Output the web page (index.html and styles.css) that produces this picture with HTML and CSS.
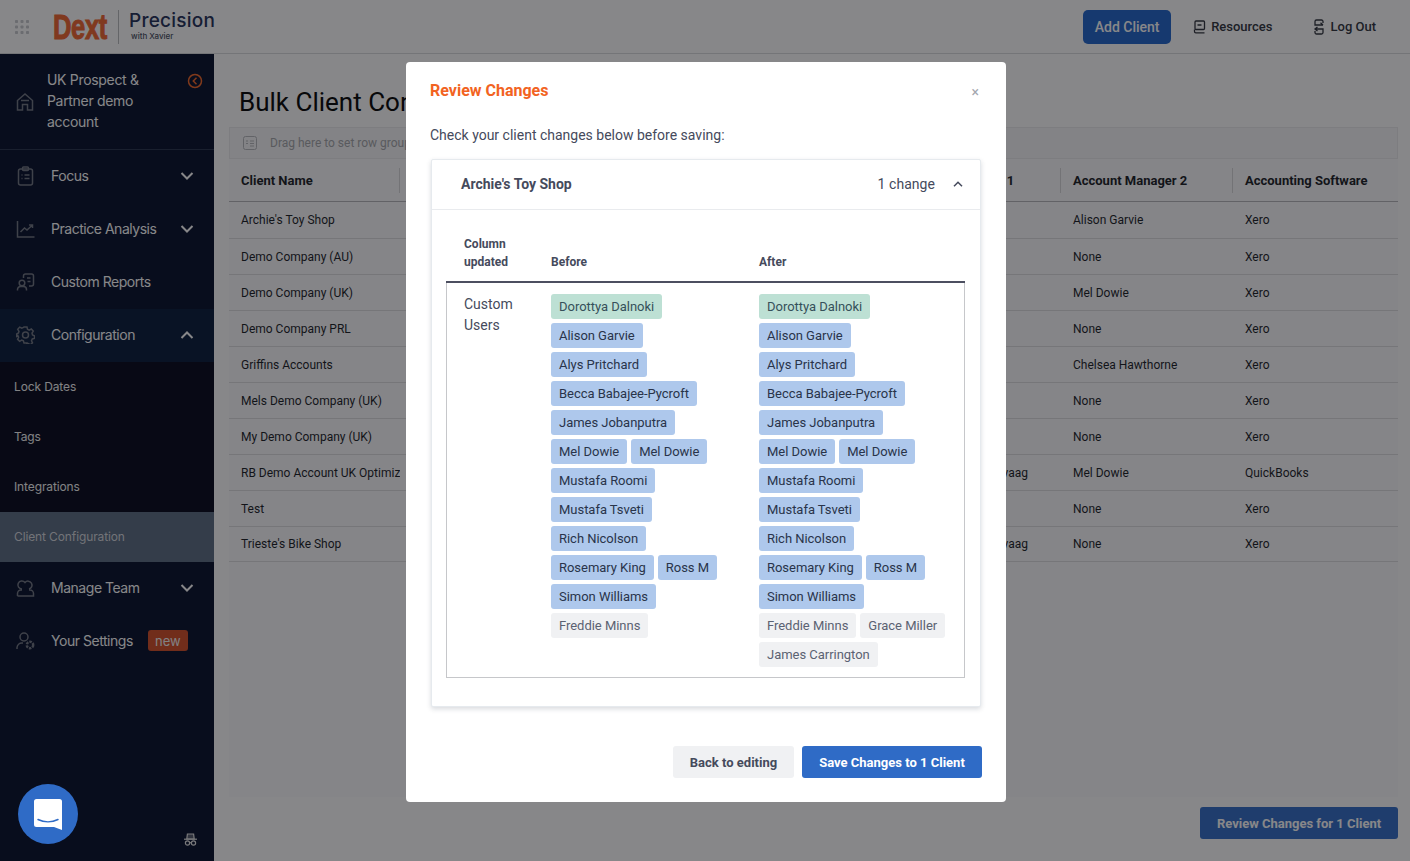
FILE: index.html
```html
<!DOCTYPE html>
<html lang="en">
<head>
<meta charset="utf-8">
<title>Bulk Client Configuration</title>
<link rel="stylesheet" href="styles.css">
</head>
<body>
<div class="app">
  <header class="topbar">
    <svg class="apps" width="16" height="16" viewBox="0 0 16 16"><g fill="#c6c8cc"><rect x="1" y="1" width="3" height="3" rx=".8"/><rect x="6.500" y="1" width="3" height="3" rx=".8"/><rect x="12" y="1" width="3" height="3" rx=".8"/><rect x="1" y="6.500" width="3" height="3" rx=".8"/><rect x="6.500" y="6.500" width="3" height="3" rx=".8"/><rect x="12" y="6.500" width="3" height="3" rx=".8"/><rect x="1" y="12" width="3" height="3" rx=".8"/><rect x="6.500" y="12" width="3" height="3" rx=".8"/><rect x="12" y="12" width="3" height="3" rx=".8"/></g></svg>
    <div class="dext"><span>Dext</span></div>
    <div class="brand">
      <div class="precision">Precision</div>
      <div class="xavier">with Xavier</div>
    </div>
    <div class="top-actions">
      <button class="add-client">Add Client</button>
      <a class="top-link resources">
        <svg width="13" height="14" viewBox="0 0 13 14" fill="none" stroke="#2b2f38" stroke-width="1.300"><rect x="2" y="1" width="9.500" height="8.500" rx="1"/><path d="M4.500 5h4M1.500 9.500v2a1.300 1.300 0 0 0 1.300 1.300h8.700"/></svg>
        Resources
      </a>
      <a class="top-link logout">
        <svg width="12" height="16" viewBox="0 0 12 16" fill="none" stroke="#2b2f38" stroke-width="1.300"><path d="M10 4V2.500A1.500 1.500 0 0 0 8.500 1h-5A1.500 1.500 0 0 0 2 2.500V6h8M7.500 3.800 10 6M2 10h8v3.500A1.500 1.500 0 0 1 8.500 15h-5A1.500 1.500 0 0 1 2 13.500V12M4.500 8 2 10l2.500 2"/></svg>
        Log Out
      </a>
    </div>
  </header>
  <div class="body">
    <aside class="sidebar">
      <div class="account">
        <svg class="account-icon" width="18" height="20" viewBox="0 0 18 20" fill="none" stroke="#6e7480" stroke-width="1.500"><path d="M1.500 8.500 9 2l7.500 6.500V18h-5v-5.500h-5V18h-5z"/><path d="M5 8.500h8"/></svg>
        <div class="account-name">UK Prospect &amp; Partner demo account</div>
        <svg class="collapse" width="16" height="16" viewBox="0 0 16 16" fill="none" stroke="#f26322" stroke-width="1.500"><circle cx="8" cy="8" r="6.500"/><path d="M9.500 4.800 6.300 8l3.200 3.200"/></svg>
      </div>
      <nav class="menu">
        <a class="item">
          <svg class="item-icon" width="18" height="20" viewBox="0 0 18 20" fill="none" stroke="#6e7480" stroke-width="1.500"><rect x="2" y="3" width="14" height="16" rx="2"/><rect x="6" y="1" width="6" height="3.500" rx="1"/><path d="M5 9h1M8 9h5M5 12.500h1M8 12.500h5"/></svg>
          <span>Focus</span>
          <svg class="chev" width="14" height="8" viewBox="0 0 14 8" fill="none" stroke="#fff" stroke-width="2"><path d="m1.500 1 5.500 5.500L12.500 1"/></svg>
        </a>
        <a class="item">
          <svg class="item-icon" width="18" height="18" viewBox="0 0 18 18" fill="none" stroke="#6e7480" stroke-width="1.500"><path d="M1 1v16h17"/><path d="m4 12 4-4 2.500 2L16 5M12.500 5H16v3"/></svg>
          <span>Practice Analysis</span>
          <svg class="chev" width="14" height="8" viewBox="0 0 14 8" fill="none" stroke="#fff" stroke-width="2"><path d="m1.500 1 5.500 5.500L12.500 1"/></svg>
        </a>
        <a class="item">
          <svg class="item-icon" width="18" height="18" viewBox="0 0 18 18" fill="none" stroke="#6e7480" stroke-width="1.500"><circle cx="5.500" cy="10" r="2.800"/><path d="M1 17.500v-1A3 3 0 0 1 4 13.500h3a3 3 0 0 1 3 3v1"/><path d="M7 5V3a2 2 0 0 1 2-2h6a2 2 0 0 1 2 2v8a2 2 0 0 1-2 2h-2.500M10.500 5H14M11 8.500h3"/></svg>
          <span>Custom Reports</span>
        </a>
        <a class="item item-open">
          <svg class="item-icon" width="18" height="18" viewBox="0 0 18 18" fill="none" stroke="#6e7480" stroke-width="1.500"><path d="M7.500 1h3l.5 2.300 1.700.8 2.100-1.100 2 2.200-1.300 2 .5 1.700 2 .9v2.600l-2.200.6-.8 1.800 1 2-2.100 2-2-1.200-1.700.7L10.500 17h-3l-.6-2.200-1.700-.7-2 1.200-2.100-2 1-2-.8-1.800L0 10.500V8l2-1 .5-1.700-1.300-2 2-2.200 2.100 1.100 1.700-.8z"/><circle cx="9" cy="9" r="3"/></svg>
          <span>Configuration</span>
          <svg class="chev" width="14" height="8" viewBox="0 0 14 8" fill="none" stroke="#fff" stroke-width="2"><path d="m1.500 7 5.500-5.500L12.500 7"/></svg>
        </a>
        <div class="submenu">
          <a class="subitem">Lock Dates</a>
          <a class="subitem">Tags</a>
          <a class="subitem">Integrations</a>
          <a class="subitem subitem-active">Client Configuration</a>
        </div>
        <a class="item">
          <svg class="item-icon" width="18" height="18" viewBox="0 0 18 18" fill="none" stroke="#6e7480" stroke-width="1.500"><path d="M5.500 10a4 4 0 1 1 3-6.500A4 4 0 1 1 12.500 10M1 17v-2.500A3.500 3.500 0 0 1 4.500 11h1M12.500 11h1a3.500 3.500 0 0 1 3.500 3.500V17H1"/></svg>
          <span>Manage Team</span>
          <svg class="chev" width="14" height="8" viewBox="0 0 14 8" fill="none" stroke="#fff" stroke-width="2"><path d="m1.500 1 5.500 5.500L12.500 1"/></svg>
        </a>
        <a class="item">
          <svg class="item-icon" width="19" height="18" viewBox="0 0 19 18" fill="none" stroke="#6e7480" stroke-width="1.500"><circle cx="8" cy="5" r="4"/><path d="M1 17v-1.500A5 5 0 0 1 6 11h1"/><circle cx="14" cy="13" r="3.200" stroke-width="2.500" stroke-dasharray="2.500 1"/></svg>
          <span>Your Settings</span>
          <span class="new-badge">new</span>
        </a>
      </nav>
      <svg class="incognito" width="13" height="13" viewBox="0 0 13 13" fill="none" stroke="#e4e4e4" stroke-width="1.200"><path d="M2.800 6 3.400 1h6.200l.6 5z" fill="#e4e4e4" fill-opacity=".35"/><path d="M0 6.200h13"/><circle cx="3.500" cy="10" r="2.100"/><circle cx="9.500" cy="10" r="2.100"/><path d="M5.600 9.700h1.800"/></svg>
    </aside>
    <main class="main">
      <h1 class="page-title">Bulk Client Configuration</h1>
      <div class="grid-panel">
        <div class="group-bar">
          <svg width="14" height="14" viewBox="0 0 14 14" fill="none" stroke="#b4b6ba" stroke-width="1"><rect x=".5" y=".5" width="13" height="13" rx="2"/><path d="M7 5h4M7 7.500h4M7 10h4M3 5h2M3 7.500h2" /></svg>
          <span>Drag here to set row groups</span>
        </div>
        <div class="row row-head">
          <div class="cell">Client Name</div><div class="cell">Tags</div><div class="cell">Account Manager 1</div><div class="cell">Account Manager 2</div><div class="cell">Accounting Software</div>
        </div>
        <div class="row row-first"><div class="cell">Archie's Toy Shop</div><div class="cell"></div><div class="cell"></div><div class="cell">Alison Garvie</div><div class="cell">Xero</div></div>
        <div class="row"><div class="cell">Demo Company (AU)</div><div class="cell"></div><div class="cell"></div><div class="cell">None</div><div class="cell">Xero</div></div>
        <div class="row"><div class="cell">Demo Company (UK)</div><div class="cell"></div><div class="cell"></div><div class="cell">Mel Dowie</div><div class="cell">Xero</div></div>
        <div class="row"><div class="cell">Demo Company PRL</div><div class="cell"></div><div class="cell"></div><div class="cell">None</div><div class="cell">Xero</div></div>
        <div class="row"><div class="cell">Griffins Accounts</div><div class="cell"></div><div class="cell"></div><div class="cell">Chelsea Hawthorne</div><div class="cell">Xero</div></div>
        <div class="row"><div class="cell">Mels Demo Company (UK)</div><div class="cell"></div><div class="cell"></div><div class="cell">None</div><div class="cell">Xero</div></div>
        <div class="row"><div class="cell">My Demo Company (UK)</div><div class="cell"></div><div class="cell"></div><div class="cell">None</div><div class="cell">Xero</div></div>
        <div class="row"><div class="cell">RB Demo Account UK Optimiz</div><div class="cell"></div><div class="cell cell-end">Karoline Haugvaag</div><div class="cell">Mel Dowie</div><div class="cell">QuickBooks</div></div>
        <div class="row"><div class="cell">Test</div><div class="cell"></div><div class="cell"></div><div class="cell">None</div><div class="cell">Xero</div></div>
        <div class="row row-last"><div class="cell">Trieste's Bike Shop</div><div class="cell"></div><div class="cell cell-end">Karoline Haugvaag</div><div class="cell">None</div><div class="cell">Xero</div></div>
      </div>
      <div class="main-footer"><button class="review-btn">Review Changes for 1 Client</button></div>
    </main>
  </div>
</div>

<div class="overlay">
  <div class="modal">
    <div class="modal-head">
      <h2 class="modal-title">Review Changes</h2>
      <span class="modal-close">×</span>
    </div>
    <p class="modal-intro">Check your client changes below before saving:</p>
    <section class="card">
      <div class="card-head">
        <span class="card-title">Archie's Toy Shop</span>
        <span class="card-count">1 change</span>
        <svg width="10" height="6" viewBox="0 0 10 6" fill="none" stroke="#454a5c" stroke-width="1.500"><path d="m1 5.300 4-4 4 4"/></svg>
      </div>
      <div class="changes">
        <div class="changes-head">
          <div>Column updated</div><div>Before</div><div>After</div>
        </div>
        <div class="changes-body">
          <div class="col-name">Custom Users</div>
          <div class="tags">
            <span class="tag tag-green">Dorottya Dalnoki</span><span class="tag">Alison Garvie</span><span class="tag">Alys Pritchard</span><span class="tag">Becca Babajee-Pycroft</span><span class="tag">James Jobanputra</span><span class="tag">Mel Dowie</span><span class="tag">Mel Dowie</span><span class="tag">Mustafa Roomi</span><span class="tag">Mustafa Tsveti</span><span class="tag">Rich Nicolson</span><span class="tag">Rosemary King</span><span class="tag">Ross M</span><span class="tag">Simon Williams</span><span class="tag tag-grey">Freddie Minns</span>
          </div>
          <div class="tags">
            <span class="tag tag-green">Dorottya Dalnoki</span><span class="tag">Alison Garvie</span><span class="tag">Alys Pritchard</span><span class="tag">Becca Babajee-Pycroft</span><span class="tag">James Jobanputra</span><span class="tag">Mel Dowie</span><span class="tag">Mel Dowie</span><span class="tag">Mustafa Roomi</span><span class="tag">Mustafa Tsveti</span><span class="tag">Rich Nicolson</span><span class="tag">Rosemary King</span><span class="tag">Ross M</span><span class="tag">Simon Williams</span><span class="tag tag-grey">Freddie Minns</span><span class="tag tag-grey">Grace Miller</span><span class="tag tag-grey">James Carrington</span>
          </div>
        </div>
      </div>
    </section>
    <div class="modal-foot">
      <button class="btn-back">Back to editing</button>
      <button class="btn-save">Save Changes to 1 Client</button>
    </div>
  </div>
</div>

<button class="chat" aria-label="Chat">
  <svg width="28" height="32" viewBox="0 0 28 32"><path d="M2.500 1h23A2.500 2.500 0 0 1 28 3.500V32l-8-3H2.500A2.500 2.500 0 0 1 0 26.500v-23A2.500 2.500 0 0 1 2.500 1z" fill="#fff"/><path d="M4 21.500c6 3 14 3 20 0" fill="none" stroke="#2f6bc6" stroke-width="1.500" stroke-linecap="round"/></svg>
</button>
</body>
</html>
```
FILE: styles.css
```css
* { box-sizing: border-box; }
html, body { margin: 0; height: 100%; overflow: hidden; }
body { font-family: Roboto, "Liberation Sans", sans-serif; background: #fff; color: #1b1f27; }
button { font-family: inherit; border: 0; cursor: pointer; }
h1, h2, p { margin: 0; }

.app { height: 861px; display: flex; flex-direction: column; }

/* top bar */
.topbar { height: 54px; flex: none; display: flex; align-items: center; background: #fff; border-bottom: 1px solid #d9dadc; padding-left: 14px; }
.apps { flex: none; }
.dext { width: 54px; margin-left: 23px; margin-right: 11px; height: 34px; display: flex; align-items: center; }
.dext span { display: inline-block; font-family: "Liberation Sans", sans-serif; font-weight: 700; font-size: 35px; line-height: 34px; letter-spacing: -.5px; color: #f0622a; transform: scaleX(.73); transform-origin: left center; -webkit-text-stroke: 1px #f0622a; }
.brand { height: 34px; border-left: 1px solid #b9babd; padding-left: 10px; display: flex; flex-direction: column; }
.precision { font-family: Inter, sans-serif; font-size: 19px; line-height: 21px; font-weight: 500; letter-spacing: .25px; color: #1c2d55; }
.xavier { font-family: Inter, sans-serif; font-size: 8px; line-height: 10px; font-weight: 500; color: #434a5c; margin-left: 2px; }
.top-actions { margin-left: auto; display: flex; align-items: center; padding-right: 34px; }
.add-client { width: 88px; height: 34px; border-radius: 5px; background: #1c62cb; color: #fff; font-size: 14px; font-weight: 500; }
.top-link { display: flex; align-items: center; font-size: 13px; font-weight: 500; color: #2b2f38; }
.top-link svg { margin-right: 5px; }
.resources { margin-left: 22px; }
.logout { margin-left: 41px; }

.body { flex: 1; display: flex; min-height: 0; }

/* sidebar */
.sidebar { position: relative; width: 214px; flex: none; background: #000a26; color: #fff; font-family: Inter, sans-serif; }
.account { position: relative; height: 96px; display: flex; align-items: center; padding-left: 47px; border-bottom: 1px solid #222f48; }
.account-icon { position: absolute; left: 16px; top: 38px; }
.account-name { width: 112px; font-size: 14px; line-height: 21px; letter-spacing: -.32px; color: #fff; margin-top: -3px; }
.collapse { position: absolute; right: 11px; top: 19px; }
.menu { display: flex; flex-direction: column; }
.item { height: 53px; display: flex; align-items: center; padding: 0 0 2px 16px; font-size: 14px; letter-spacing: -.47px; color: #fff; }
.item-icon { flex: none; width: 19px; margin-right: 16px; }
.item .chev { margin-left: auto; margin-right: 20px; }
.item-open { background: #021636; }
.submenu { background: #000316; display: flex; flex-direction: column; }
.subitem { height: 50px; display: flex; align-items: center; padding: 0 0 2px 14px; font-size: 12px; letter-spacing: -.12px; color: #f4f4f4; }
.subitem-active { background: #586a80; color: #d4d7dc; }
.new-badge { margin-left: 15px; width: 40px; height: 21px; border-radius: 3px; background: #d24a22; display: flex; align-items: center; justify-content: center; font-size: 13px; letter-spacing: 0; color: #f3f3f3; }
.incognito { position: absolute; right: 17px; bottom: 15px; }

/* main */
.main { flex: 1; min-width: 0; background: #fff; padding: 0 12px 0 15px; display: flex; flex-direction: column; }
.page-title { font-size: 26px; line-height: 32px; font-weight: 400; color: #000; margin: 32px 0 0 10px; height: 41px; }
.grid-panel { height: 670px; background: #fbfbfc; }
.group-bar { height: 32px; display: flex; align-items: center; padding-left: 13px; border: 1px solid #eaebed; background: #f7f7f8; font-size: 12px; color: #a3a5a9; }
.group-bar span { margin-left: 13px; }
.row { height: 36px; display: grid; grid-template-columns: 171px 488px 173px 172px 165px; align-items: center; border-bottom: 1px solid #dcdcde; font-size: 12px; color: #15181e; }
.row-first { height: 37px; }
.row-last { height: 35px; }
.cell { padding-left: 12px; white-space: nowrap; overflow: hidden; }
.cell-end { padding: 0 33px 0 0; text-align: right; }
.row-head { height: 43px; font-size: 13px; font-weight: 700; border-bottom: 1px solid #b4b5b8; }
.row-head .cell { height: 25px; line-height: 26px; border-right: 1px solid #d6d7d9; }
.row-head .cell:last-child { border-right: 0; }
.main-footer { flex: 1; display: flex; justify-content: flex-end; align-items: flex-start; padding-top: 10px; }
.review-btn { width: 198px; height: 32px; border-radius: 3px; background: #2f6bc6; color: #fff; font-size: 13px; font-weight: 700; }

/* overlay and modal */
.overlay { position: fixed; inset: 0; background: rgba(16,16,20,.5); display: flex; align-items: flex-start; }
.modal { width: 600px; height: 740px; margin: 62px 0 0 406px; background: #fff; border-radius: 4px; padding: 0 24px; display: flex; flex-direction: column; color: #454a5c; }
.modal-head { display: flex; justify-content: space-between; align-items: center; height: 56px; }
.modal-title { font-size: 16px; line-height: 20px; font-weight: 700; color: #f26322; margin-top: 1px; }
.modal-close { font-size: 14px; line-height: 14px; color: #a4a7af; margin: 4px 3px 0 0; }
.modal-intro { font-size: 14px; line-height: 18px; margin-top: 8px; }
.card { width: 550px; height: 548px; margin: 15px 0 0 1px; border: 1px solid #e6eaee; border-radius: 2px; box-shadow: 0 2px 5px rgba(40,50,70,.18); background: #fff; }
.card-head { height: 50px; display: flex; align-items: center; padding: 0 17px 2px 29px; border-bottom: 1px solid #e9ebee; }
.card-title { font-size: 14px; font-weight: 700; }
.card-count { margin-left: auto; font-size: 14px; margin-right: 18px; letter-spacing: .05px; }
.changes { margin: 0 15px 0 14px; padding-top: 25px; }
.changes-head { display: grid; grid-template-columns: 87px 208px 1fr; align-items: end; height: 48px; padding: 0 0 13px 18px; font-size: 12px; line-height: 18px; font-weight: 700; border-bottom: 2px solid #4c4f60; }
.changes-head div:first-child { width: 60px; }
.changes-body { display: grid; grid-template-columns: 87px 208px 1fr; padding: 11px 0 10px 17px; border: 1px solid #c6c7ca; border-top: 0; height: 395px; }
.col-name { width: 60px; font-size: 14px; line-height: 21px; }
.tags { width: 190px; display: flex; flex-wrap: wrap; align-content: flex-start; gap: 4px; }
.tag { height: 25px; padding: 0 8px; border-radius: 3px; background: #aec8ec; color: #29344a; font-size: 13px; line-height: 25px; letter-spacing: -.03px; white-space: nowrap; }
.tag-green { background: #bde0d4; color: #36505a; }
.tag-grey { background: #f0f1f3; color: #5b6272; }
.modal-foot { display: flex; justify-content: flex-end; gap: 8px; margin-top: 39px; }
.btn-back, .btn-save { height: 32px; border-radius: 3px; font-size: 13px; font-weight: 700; }
.btn-back { width: 121px; background: #f0f1f3; color: #454a5c; }
.btn-save { width: 180px; background: #2f6bc6; color: #fff; }

/* chat launcher */
.chat { position: fixed; left: 18px; top: 784px; width: 60px; height: 60px; border-radius: 50%; background: #2f6bc6; padding: 0; display: flex; align-items: center; justify-content: center; }
```
